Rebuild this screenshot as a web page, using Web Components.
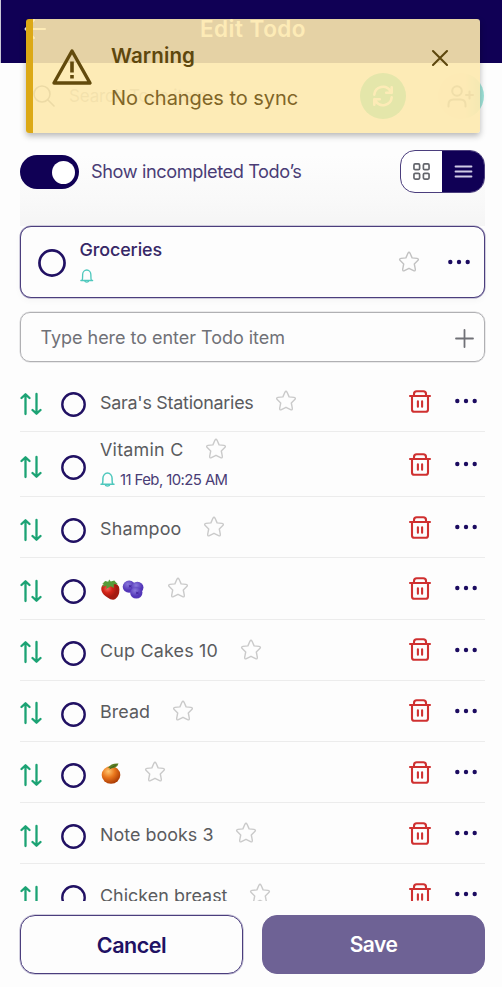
<!DOCTYPE html>
<html lang="en">
<head>
<meta charset="utf-8">
<title>Edit Todo</title>
<style>
html,body{margin:0;height:987px;overflow:hidden;background:#fdfdfd}
body{font-family:Inter,"Liberation Sans",sans-serif;color:#5a5b5e}
</style>
</head>
<body>
<todo-app></todo-app>
<script>
const ICONS = {
  back: [22,22,'<path d="M21 11H1.5M10 2 1.5 11l8.500 9"/>',2],
  search: [22,22,'<circle cx="9" cy="9" r="8"/><path d="m15 15 6 6"/>',1.6],
  sync: [24,24,'<path d="M2.500 10.500A9.500 9.500 0 0 1 20 6.500l1.500 2M21.500 2.500v6h-6M21.500 13.500A9.500 9.500 0 0 1 4 17.500l-1.500-2M2.500 21.500v-6h6"/>',2.8],
  user: [27,24,'<circle cx="10" cy="7" r="4.800"/><path d="M1.500 22.500v-2q0-5 5-5h7q5 0 5 5v2M22.500 7.500v7M19 11h7"/>',2],
  warn: [40,36,'<path d="M20 2 38 34H2Z"/><path d="M20 12.500v11M20 26v3.500" stroke-width="3.600" stroke-linecap="butt"/>',3.4],
  close: [18,18,'<path d="m2 2 14 14M16 2 2 16"/>',2.1],
  grid: [18,18,'<rect x="1" y="1" width="6" height="6" rx="1.300"/><rect x="11" y="1" width="6" height="6" rx="1.300"/><rect x="1" y="11" width="6" height="6" rx="1.300"/><rect x="11" y="11" width="6" height="6" rx="1.300"/>',1.8],
  list: [17,13,'<path d="M.5 1.500h16M.5 6.500h16M.5 11.500h16"/>',1.8],
  star: [22,22,'<path d="M9.900 2.300Q11 .3 12.100 2.300L14.100 6.900 19 7.400Q21.300 7.900 19.800 9.600L16.300 13 17.300 18.200Q17.500 20.400 15.600 19.700L11 17.300 6.400 19.700Q4.500 20.400 4.700 18.200L5.700 13 2.200 9.600Q.7 7.900 3 7.400L7.900 6.900Z"/>',1.4],
  dots: [24,6,'<g fill="#1b0b60" stroke="none"><circle cx="3.300" cy="3" r="2.200"/><circle cx="12" cy="3" r="2.200"/><circle cx="20.700" cy="3" r="2.200"/></g>',1],
  bell: [15,15,'<path d="M1 12.300h13M2.200 12.200C3.100 11 2.900 9 2.900 6.300a4.600 5.200 0 0 1 9.200 0c0 2.700-.2 4.700.7 5.900"/><path d="M5.600 13.400q1.900 1.300 3.800 0"/>',1.5],
  plus: [19,19,'<path d="M9.500 1v17M1 9.500h17"/>',1.8],
  sort: [22,22,'<path d="M5.500 21V1.600M1.500 5l4-3.700 4 3.700M16.500 1v19.400M12.500 17l4 3.700 4-3.700"/>',2.3],
  trash: [22,23,'<path d="M1 6h20M5 6V4q0-2.700 2.700-2.700h6.600q2.700 0 2.700 2.700V6M3 6v13.500q0 2.300 2.300 2.300h11.400q2.300 0 2.300-2.300V6M8.900 11.300v5.400M13.100 11.300v5.400"/>',2.1],
  berry: [44,22,'<defs><radialGradient id="s" cx=".35" cy=".35"><stop stop-color="#f0685a"/><stop offset=".5" stop-color="#d42418"/><stop offset="1" stop-color="#a41a10"/></radialGradient><radialGradient id="b" cx=".4" cy=".3"><stop stop-color="#8a79dc"/><stop offset="1" stop-color="#5336b8"/></radialGradient></defs><g stroke="none"><path d="M2 7C0 11 2 16 7 19q5 4 8 2 4-3 4-10 0-6-7-7-7 0-10 3Z" fill="url(#s)"/><path d="M2 5.500 5 2l3 1L9 .5l1.500 2L14 1.500l1.500 2 2 2-4 0 0 4-3-2-4.500 3 .5-3.500-4.500 1 2-3Z" fill="#569c38"/><circle cx="28.500" cy="8" r="6.300" fill="url(#b)"/><circle cx="36.500" cy="9" r="6" fill="url(#b)"/><circle cx="35.500" cy="14.500" r="6" fill="url(#b)"/><path d="m28 6 1.500.8L31 6l-.6 1.600.6 1.600-1.500-.8L28 9.200l.6-1.600ZM35 13l1.500.8L38 13l-.6 1.600.6 1.600-1.500-.8-1.500.8.6-1.600Z" fill="#4527a0"/></g>',1],
  orange: [22,22,'<defs><radialGradient id="o" cx=".36" cy=".3" r=".7"><stop stop-color="#ffc56e"/><stop offset=".5" stop-color="#e9761c"/><stop offset="1" stop-color="#ad3d05"/></radialGradient></defs><g stroke="none"><circle cx="11" cy="12.500" r="9.300" fill="url(#o)"/><path d="M8 5q3-5 10.500-4.500Q17 6 10 5.500Z" fill="#5b7f24"/><path d="m10 6 6-4" stroke="#3c5818" stroke-width=".8"/></g>',1]
};
const def = (n, html, after) => customElements.define(n, class extends HTMLElement {
  connectedCallback(){
    if (this.shadowRoot) return;
    const r = this.attachShadow({mode:'open'});
    r.innerHTML = typeof html === 'function' ? html(this) : html;
    if (after) after(this, r);
  }
});

def('ui-icon', el => {
  const [w,h,body,sw] = ICONS[el.getAttribute('name')];
  return `<style>:host{display:block;flex:none;line-height:0}svg{display:block;overflow:visible}</style>
  <svg width="${el.getAttribute('w')||w}" height="${el.getAttribute('h')||h}" viewBox="0 0 ${w} ${h}" preserveAspectRatio="none" fill="none" stroke="currentColor" stroke-width="${sw}" stroke-linecap="round" stroke-linejoin="round">${body}</svg>`;
});

/* Text whose tracking is adjusted so that it spans a given width. */
const ctx = document.createElement('canvas').getContext('2d');
def('ui-text', '<style>:host{display:block;flex:none;white-space:nowrap;line-height:24px}</style><slot></slot>', el => {
  const s = +el.getAttribute('size'), wt = el.getAttribute('weight') || 400, w = +el.getAttribute('w'), t = el.textContent;
  ctx.font = `${wt} ${s}px Inter, "Liberation Sans", sans-serif`;
  el.style.fontSize = s + 'px';
  el.style.fontWeight = wt;
  el.style.width = w + 'px';
  el.style.letterSpacing = ((w - ctx.measureText(t).width) / t.length).toFixed(3) + 'px';
});

def('ui-check', `<style>:host{display:block;flex:none;width:var(--d,25px);height:var(--d,25px)}svg{display:block;width:100%;height:100%}</style>
<svg viewBox="0 0 25 25"><circle cx="12.500" cy="12.500" r="11.200" fill="none" stroke="#211163" stroke-width="2.400"/></svg>`);

def('app-header', `<style>
:host{display:flex;align-items:flex-start;height:63px;background:#100055;color:#fff;box-sizing:border-box;border-left:1px solid #c9c7d6;padding-left:23px}
ui-icon{margin-top:18px}ui-text{margin:17px 0 0 154px}
</style><ui-icon name="back"></ui-icon><ui-text size="22.500" weight="600" w="106">Edit Todo</ui-text>`);

def('search-bar', `<style>
:host{display:flex;align-items:center;height:66px;padding:0 18px 0 33px;color:#999}
ui-icon[name=search]{color:#555}
ui-text{margin-left:14px}
.c{width:46px;height:46px;border-radius:50%;display:grid;place-items:center}
.a{background:#00ca80;color:#fff;margin-left:auto}.b{background:linear-gradient(90deg,#f8f4ee 60%,#9fe5da 95%);color:#777;margin-left:32px}
.b ui-icon{margin-right:2px}
</style><ui-icon name="search"></ui-icon><ui-text size="17" w="138">Search Todo item</ui-text>
<div class="c a"><ui-icon name="sync" w="22" h="22"></ui-icon></div><div class="c b"><ui-icon name="user"></ui-icon></div>`);

def('warning-toast', `<style>
:host{position:absolute;left:26px;top:19px;width:454px;height:114px;box-sizing:border-box;display:flex;align-items:flex-start;background:rgba(253,233,174,.9);border-left:7px solid #dca916;border-radius:3px;box-shadow:0 3px 6px rgba(0,0,0,.28)}
ui-icon[name=warn]{margin:30px 0 0 19px;color:#624a0c}
.t{margin:25px 0 0 19px;display:grid;gap:18px}
.h{color:#5e470d}.m{color:#806527}
ui-icon[name=close]{margin:30px 0 0 auto;padding-right:31px;color:#5e470d}
</style><ui-icon name="warn"></ui-icon>
<div class="t"><ui-text class="h" size="20.500" weight="600" w="84">Warning</ui-text><ui-text class="m" size="20" w="187">No changes to sync</ui-text></div>
<ui-icon name="close"></ui-icon>`);

def('filter-bar', `<style>
:host{display:flex;align-items:flex-start;box-sizing:border-box;height:71px;margin-top:26px;background:linear-gradient(#fdfdfd,#f9f9f9 60%,#f5f5f5)}
.sw{box-sizing:border-box;width:59px;height:34px;border-radius:17px;background:#100055;display:flex;justify-content:flex-end;align-items:center;padding-right:4.500px}
.sw i{width:23px;height:23px;border-radius:50%;background:#fff}
ui-text{margin:4px 0 0 12px;color:#4a3d76}
.seg{box-sizing:border-box;width:85px;height:43px;margin:-5px 0 0 auto;border:1px solid #4b3e7d;border-radius:15px;display:grid;grid-template-columns:41px 1fr;overflow:hidden;background:#fff}
.seg div{display:grid;place-items:center;color:#64666c;padding-bottom:1px}
.seg .on{background:#100055;color:#d0cbe6}
</style><div class="sw"><i></i></div><ui-text size="18.200" w="210.500">Show incompleted Todo’s</ui-text>
<div class="seg"><div><ui-icon name="grid" w="17" h="17"></ui-icon></div><div class="on"><ui-icon name="list"></ui-icon></div></div>`);

def('todo-card', `<style>
:host{box-sizing:border-box;height:72px;display:flex;align-items:center;border:1px solid #4b3e7d;border-radius:11px;padding:0 13.500px 0 17px;background:#fdfdfd;box-shadow:0 0 0 .5px #a59fc0,0 3px 6px rgba(0,0,0,.03)}
ui-check{--d:28px;margin-top:2px}
.t{margin:-3px 0 0 13.500px}
ui-text{color:#362766}ui-icon[name=bell]{color:#4fc8bd;margin-top:7px}
ui-icon[name=star]{margin-left:auto;color:#c2c2c2}ui-icon[name=dots]{margin:-1px 0 0 27px}
</style><ui-check></ui-check><div class="t"><ui-text size="17.900" weight="500" w="82.500">Groceries</ui-text><ui-icon name="bell" w="13.500" h="14"></ui-icon></div>
<ui-icon name="star"></ui-icon><ui-icon name="dots"></ui-icon>`);

def('todo-entry', `<style>
:host{box-sizing:border-box;height:50px;margin-top:14px;display:flex;align-items:center;justify-content:space-between;border:1px solid #b0b0b3;box-shadow:0 0 0 .5px #d8d8da;border-radius:10px;padding:0 10px 0 19.500px;color:#707177}
ui-icon{margin-top:2px}ui-text{margin-top:1px}
</style><ui-text size="18" w="244.500">Type here to enter Todo item</ui-text><ui-icon name="plus"></ui-icon>`);

def('todo-row', `<style>
:host{box-sizing:border-box;height:61.200px;display:flex;align-items:center;border-bottom:1.500px solid #ececec;padding-right:7.200px}
:host([tall]){height:65px}
ui-icon[name=sort]{color:#1ca374;margin-top:5px}
ui-check{margin:7px 0 0 18.500px}
.t{margin-left:14.500px}
.l{display:flex;align-items:center}
:host([tall]) .t{margin-top:-2px}
ui-icon[name=star]{color:#cacaca}
ui-icon[name=trash]{margin-left:auto;color:#cf3030}
ui-icon[name=dots]{margin-left:22.500px}
::slotted(*){margin:3px 21.500px 0 0}
::slotted(ui-icon){margin-top:2px}
</style><ui-icon name="sort"></ui-icon><ui-check></ui-check>
<div class="t"><div class="l"><slot></slot><ui-icon name="star"></ui-icon></div><slot name="sub"></slot></div>
<ui-icon name="trash"></ui-icon><ui-icon name="dots"></ui-icon>`);

def('todo-reminder', `<style>
:host{display:flex;align-items:center;color:#4a3d76;height:24px;margin-top:5px!important}
ui-icon{color:#4fc8bd}ui-text{margin:2px 0 0 5px}
</style><ui-icon name="bell"></ui-icon><ui-text size="14.900" w="107.500">11 Feb, 10:25 AM</ui-text>`);

def('action-button', `<style>
:host{box-sizing:border-box;display:grid;place-items:center;border:1px solid #4b3e7d;box-shadow:0 0 0 .5px #a59fc0;border-radius:15px;color:#211163}
:host([primary]){background:#6e6295;border-color:#6e6295;box-shadow:none;color:#fff}
</style><slot></slot>`);

const rows = [["Sara's Stationaries",153.5],["Vitamin C",83.5],["Shampoo",81.5],["berry"],["Cup Cakes 10",118],["Bread",50],["orange"],["Note books 3",113.5],["Chicken breast",127.5]];
def('todo-app', () => `<style>
:host{display:flex;flex-direction:column;height:987px;position:relative}
main{flex:1;min-height:0;display:flex;flex-direction:column;padding:0 17px 0 20px}
.list{height:530px;overflow:hidden;margin-top:9px;flex:none}
footer{display:grid;grid-template-columns:1fr 1fr;gap:19px;height:59px;margin-top:14px;flex:none}
</style><app-header></app-header><search-bar></search-bar>
<main><filter-bar></filter-bar><todo-card></todo-card><todo-entry></todo-entry>
<div class="list">${rows.map(([t,w],i)=>`<todo-row${i==1?' tall':''}>${w?`<ui-text size="17.900" w="${w}">${t}</ui-text>`:`<ui-icon name="${t}" w="${t=='berry'?45:22}" h="21"></ui-icon>`}${i==1?'<todo-reminder slot="sub"></todo-reminder>':''}</todo-row>`).join('')}</div>
<footer><action-button><ui-text size="21.500" weight="600" w="69.500">Cancel</ui-text></action-button><action-button primary><ui-text size="21" weight="600" w="47.500">Save</ui-text></action-button></footer></main>
<warning-toast></warning-toast>`);
</script>
</body>
</html>
